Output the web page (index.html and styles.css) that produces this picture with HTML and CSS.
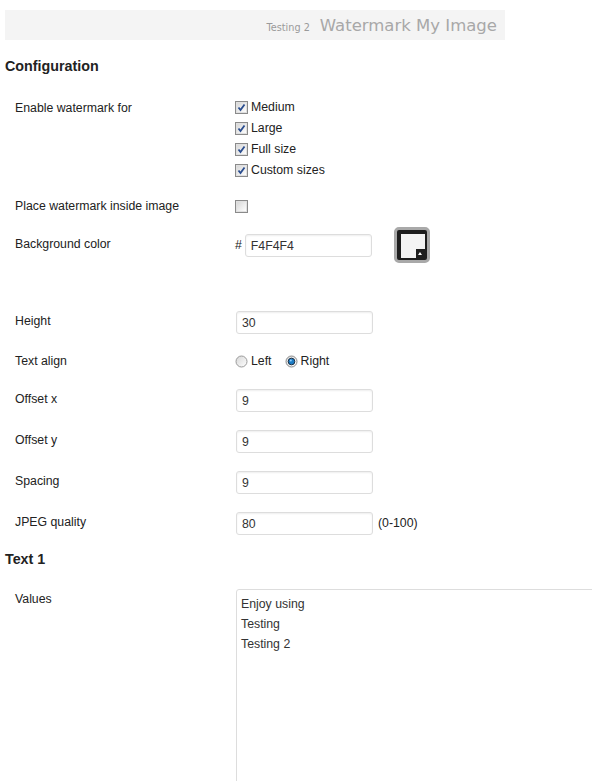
FILE: index.html
```html
<!DOCTYPE html>
<html lang="en">
<head>
  <meta charset="UTF-8">
  <title>Watermark My Image</title>
  <link rel="stylesheet" href="styles.css">
</head>
<body>
  <div class="wrap">
    <div class="preview">
      <span class="preview-small">Testing 2</span>
      <span class="preview-big">Watermark My Image</span>
    </div>

    <h3>Configuration</h3>

    <div class="row row-checks">
      <div class="label">Enable watermark for</div>
      <div class="field">
        <label class="opt"><svg class="box" width="13" height="13" viewBox="0 0 13 13"><use href="#cb-on"/></svg>Medium</label>
        <label class="opt"><svg class="box" width="13" height="13" viewBox="0 0 13 13"><use href="#cb-on"/></svg>Large</label>
        <label class="opt"><svg class="box" width="13" height="13" viewBox="0 0 13 13"><use href="#cb-on"/></svg>Full size</label>
        <label class="opt"><svg class="box" width="13" height="13" viewBox="0 0 13 13"><use href="#cb-on"/></svg>Custom sizes</label>
      </div>
    </div>

    <div class="row row-small">
      <div class="label">Place watermark inside image</div>
      <div class="field">
        <label class="opt"><svg class="box" width="13" height="13" viewBox="0 0 13 13"><use href="#cb-off"/></svg></label>
      </div>
    </div>

    <div class="row row-color">
      <div class="label">Background color</div>
      <div class="field field-inline">
        <span class="hash">#</span>
        <input type="text" class="text text-color" value="F4F4F4">
        <span class="swatch"><span class="swatch-fill"><span class="swatch-corner"></span></span></span>
      </div>
    </div>

    <div class="row row-small">
      <div class="label">Height</div>
      <div class="field"><input type="text" class="text" value="30"></div>
    </div>

    <div class="row row-small">
      <div class="label">Text align</div>
      <div class="field field-inline">
        <label class="opt"><svg class="box" width="13" height="13" viewBox="0 0 13 13"><use href="#rd-off"/></svg>Left</label>
        <label class="opt opt-gap"><svg class="box" width="13" height="13" viewBox="0 0 13 13"><use href="#rd-on"/></svg>Right</label>
      </div>
    </div>

    <div class="row">
      <div class="label">Offset x</div>
      <div class="field"><input type="text" class="text" value="9"></div>
    </div>

    <div class="row">
      <div class="label">Offset y</div>
      <div class="field"><input type="text" class="text" value="9"></div>
    </div>

    <div class="row">
      <div class="label">Spacing</div>
      <div class="field"><input type="text" class="text" value="9"></div>
    </div>

    <div class="row row-last">
      <div class="label">JPEG quality</div>
      <div class="field field-inline"><input type="text" class="text" value="80"> <span class="note">(0-100)</span></div>
    </div>

    <h3 class="h-text">Text 1</h3>

    <div class="row">
      <div class="label label-down">Values</div>
      <div class="field"><textarea class="values">Enjoy using
Testing
Testing 2</textarea></div>
    </div>
  </div>

  <!-- checkbox / radio glyphs -->
  <svg width="0" height="0" class="defs">
    <defs>
      <linearGradient id="g-box" x1="0" y1="0" x2="1" y2="1">
        <stop offset="0" stop-color="#d6d6d6"/>
        <stop offset="1" stop-color="#ffffff"/>
      </linearGradient>
      <symbol id="cb-off" viewBox="0 0 13 13">
        <rect x="0.5" y="0.5" width="12" height="12" fill="#fff" stroke="#8a8a8a"/>
        <rect x="1.5" y="1.5" width="10" height="10" fill="url(#g-box)" stroke="#e0e0e0"/>
      </symbol>
      <symbol id="cb-on" viewBox="0 0 13 13">
        <rect x="0.5" y="0.5" width="12" height="12" fill="#fff" stroke="#8a8a8a"/>
        <rect x="1.5" y="1.5" width="10" height="10" fill="url(#g-box)" stroke="#e0e0e0"/>
        <path d="M3.5 6.5 L5.5 9 L9.5 3.5" fill="none" stroke="#2a4d8f" stroke-width="1.8"/>
      </symbol>
      <symbol id="rd-off" viewBox="0 0 13 13">
        <circle cx="6.5" cy="6.5" r="5.5" fill="url(#g-box)" stroke="#9a9a9a"/>
      </symbol>
      <symbol id="rd-on" viewBox="0 0 13 13">
        <circle cx="6.5" cy="6.5" r="5.5" fill="url(#g-box)" stroke="#8a8a8a"/>
        <circle cx="6.5" cy="6.5" r="3.3" fill="#1c7cc4" stroke="#1d2f44" stroke-width="1"/>
        <circle cx="5.8" cy="5.6" r="1" fill="#8fd0ff"/>
      </symbol>
    </defs>
  </svg>
</body>
</html>
```

FILE: styles.css
```css
* {
  box-sizing: border-box;
}

body {
  margin: 0;
  font-family: "Liberation Sans", Arial, sans-serif;
  font-size: 12.3px;
  color: #222;
  background: #fff;
  overflow: hidden;
}

.wrap {
  padding: 10px 5px 0;
  width: 640px;
}

.defs {
  position: absolute;
}

/* preview bar */
.preview {
  width: 500px;
  height: 30px;
  background: #f4f4f4;
  display: flex;
  justify-content: flex-end;
  align-items: baseline;
  padding: 6px 8px 0 0;
  font-family: "DejaVu Sans", Verdana, sans-serif;
}

.preview-small {
  font-size: 9.7px;
  color: #9a9a9a;
  margin-right: 10px;
}

.preview-big {
  font-size: 16.5px;
  color: #a8a8a8;
}

h3 {
  margin: 17px 0 22px;
  font-size: 14.3px;
  line-height: 18px;
  font-weight: bold;
  color: #222;
}

.h-text {
  margin: 15px 0 20px;
}

/* rows */
.row {
  display: grid;
  grid-template-columns: 221px 1fr;
  padding-left: 10px;
  margin-bottom: 18px;
}

.row-checks {
  margin-bottom: 15px;
}

.row-small {
  margin-bottom: 17px;
}

.row-color {
  margin-bottom: 54px;
}

.row-last {
  margin-bottom: 0;
}

.label {
  line-height: 21px;
}

.row-checks .label {
  padding-top: 1px;
}

.label-down {
  padding-top: 1px;
}

.field {
  line-height: 21px;
}

.field-inline {
  display: flex;
  align-items: center;
  height: 21px;
}

.opt {
  display: flex;
  align-items: center;
  height: 21px;
  width: max-content;
}

.opt-gap {
  margin-left: 14px;
}

.box {
  display: block;
  margin: 0 3px 0 -1px;
}

.text {
  display: block;
  width: 137px;
  height: 23px;
  border: 1px solid #ddd;
  border-radius: 3px;
  box-shadow: inset 0 1px 2px rgba(0, 0, 0, 0.07);
  padding: 0 5px;
  font-family: "Liberation Sans", Arial, sans-serif;
  font-size: 12.3px;
  color: #333;
  background: #fff;
}

.row-color .field-inline,
.row-last .field-inline {
  height: 23px;
}

.hash {
  margin-right: 3px;
  margin-left: -1px;
}

.text-color {
  width: 127px;
}

.note {
  margin-left: 5px;
}

/* colour picker swatch */
.swatch {
  display: block;
  width: 36px;
  height: 36px;
  margin: -7px 0 -6px 22px;
  border: 3px solid #a9a9a9;
  border-radius: 5px;
  background: #1e1e1e;
  padding: 4px;
}

.swatch-fill {
  display: block;
  position: relative;
  width: 24px;
  height: 24px;
  background: #f4f4f4;
}

.swatch-corner {
  position: absolute;
  right: 0;
  bottom: 0;
  width: 9px;
  height: 9px;
  background: #1e1e1e;
}

.swatch-corner::after {
  content: "";
  position: absolute;
  left: 2px;
  top: 3px;
  border-left: 2.5px solid transparent;
  border-right: 2.5px solid transparent;
  border-bottom: 3px solid #fff;
}

.values {
  display: block;
  width: 520px;
  height: 260px;
  margin-top: 1px;
  border: 1px solid #ddd;
  border-radius: 3px;
  padding: 4px 4px 3px;
  font-family: "Liberation Sans", Arial, sans-serif;
  font-size: 12.3px;
  line-height: 20px;
  color: #333;
  resize: none;
}
```
